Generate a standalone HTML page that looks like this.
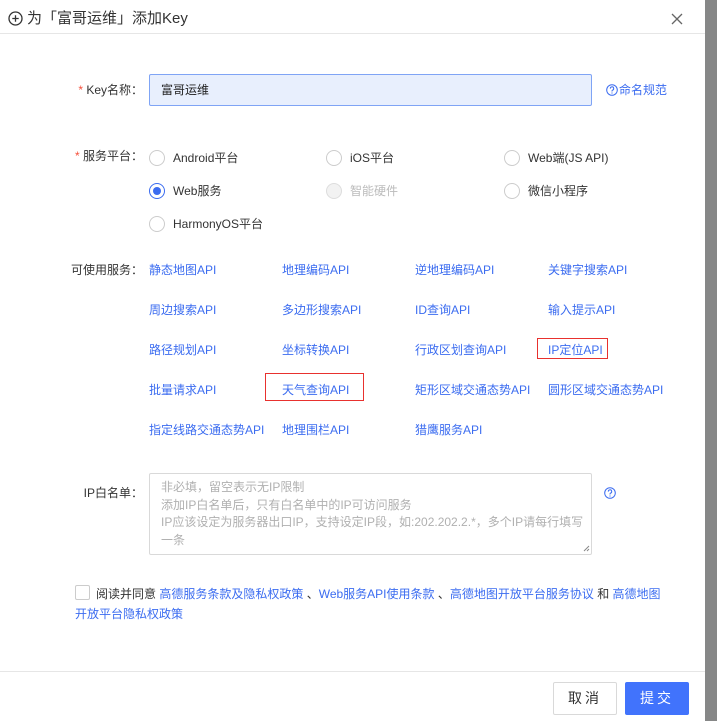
<!DOCTYPE html>
<html><head><meta charset="utf-8"><style>
*{margin:0;padding:0;box-sizing:border-box}
body{width:717px;height:721px;position:relative;background:#fff;font-family:"Liberation Sans","Noto Sans CJK SC",sans-serif;font-size:12px;color:#333;overflow:hidden}
.a{position:absolute;white-space:nowrap;line-height:16px}
.l{color:#3b6cf0}
.lab{text-align:right;width:120px}
.star{color:#f5503c}
.r{position:absolute;width:16px;height:16px;border:1px solid #ccc;border-radius:50%;background:#fff}
</style></head><body>
<div style="position:absolute;left:705px;top:0;width:12px;height:721px;background:#868787"></div>
<svg style="position:absolute;left:8px;top:11px" width="15" height="15" viewBox="0 0 15 15"><circle cx="7.5" cy="7.5" r="6.5" fill="none" stroke="#333" stroke-width="1.3"/><path d="M7.5 4.3v6.4M4.3 7.5h6.4" stroke="#333" stroke-width="1.3"/></svg>
<div class="a" style="left:27px;top:10px;font-size:15px;line-height:18px;color:#333">为「富哥运维」添加Key</div>
<svg style="position:absolute;left:671px;top:13px" width="12" height="12" viewBox="0 0 12 12"><path d="M1 1L11 11M11 1L1 11" stroke="#666" stroke-width="1.3"/></svg>
<div style="position:absolute;left:0;top:33px;width:705px;height:1px;background:#e6e6e6"></div>

<div class="a lab" style="left:23px;top:82px"><span class="star">*</span> Key名称：</div>
<div style="position:absolute;left:149px;top:74px;width:443px;height:32px;background:#e8effd;border:1px solid #7fa4f5;border-radius:2px"></div>
<div class="a" style="left:161px;top:82px;color:#222">富哥运维</div>
<svg style="position:absolute;left:606px;top:84px" width="12" height="12" viewBox="0 0 12 12"><circle cx="6" cy="6" r="5.3" fill="none" stroke="#3b6cf0"/><path d="M4.3 4.6a1.7 1.7 0 1 1 2.3 1.5c-.5.2-.6.5-.6 1v.4" fill="none" stroke="#3b6cf0"/><circle cx="6" cy="9" r=".6" fill="#3b6cf0"/></svg>
<div class="a l" style="left:619px;top:82px">命名规范</div>

<div class="a lab" style="left:23px;top:148px"><span class="star">*</span> 服务平台：</div>
<div class="r" style="left:149px;top:150px"></div><div class="a" style="left:173px;top:150px">Android平台</div>
<div class="r" style="left:326px;top:150px"></div><div class="a" style="left:350px;top:150px">iOS平台</div>
<div class="r" style="left:504px;top:150px"></div><div class="a" style="left:528px;top:150px">Web端(JS API)</div>
<div class="r" style="left:149px;top:183px;border-color:#3b6cf0"><div style="position:absolute;left:3px;top:3px;width:8px;height:8px;border-radius:50%;background:#3b6cf0"></div></div><div class="a" style="left:173px;top:183px">Web服务</div>
<div class="r" style="left:326px;top:183px;background:#f2f2f2;border-color:#ddd"></div><div class="a" style="left:350px;top:183px;color:#bbb">智能硬件</div>
<div class="r" style="left:504px;top:183px"></div><div class="a" style="left:528px;top:183px">微信小程序</div>
<div class="r" style="left:149px;top:216px"></div><div class="a" style="left:173px;top:216px">HarmonyOS平台</div>

<div class="a lab" style="left:23px;top:262px">可使用服务：</div>
<div class="a l" style="left:149px;top:262px">静态地图API</div><div class="a l" style="left:282px;top:262px">地理编码API</div><div class="a l" style="left:415px;top:262px">逆地理编码API</div><div class="a l" style="left:548px;top:262px">关键字搜索API</div>
<div class="a l" style="left:149px;top:302px">周边搜索API</div><div class="a l" style="left:282px;top:302px">多边形搜索API</div><div class="a l" style="left:415px;top:302px">ID查询API</div><div class="a l" style="left:548px;top:302px">输入提示API</div>
<div class="a l" style="left:149px;top:342px">路径规划API</div><div class="a l" style="left:282px;top:342px">坐标转换API</div><div class="a l" style="left:415px;top:342px">行政区划查询API</div><div class="a l" style="left:548px;top:342px">IP定位API</div>
<div class="a l" style="left:149px;top:382px">批量请求API</div><div class="a l" style="left:282px;top:382px">天气查询API</div><div class="a l" style="left:415px;top:382px">矩形区域交通态势API</div><div class="a l" style="left:548px;top:382px">圆形区域交通态势API</div>
<div class="a l" style="left:149px;top:422px">指定线路交通态势API</div><div class="a l" style="left:282px;top:422px">地理围栏API</div><div class="a l" style="left:415px;top:422px">猎鹰服务API</div>
<div style="position:absolute;left:537px;top:338px;width:71px;height:21px;border:1px solid #e8312e"></div>
<div style="position:absolute;left:265px;top:373px;width:99px;height:28px;border:1px solid #e8312e"></div>

<div class="a lab" style="left:23px;top:485px">IP白名单：</div>
<div style="position:absolute;left:149px;top:473px;width:443px;height:82px;border:1px solid #d9d9d9;border-radius:2px"></div>
<div class="a" style="left:161px;top:479px;color:#b0b0b0;line-height:17.5px">非必填，留空表示无IP限制<br>添加IP白名单后，只有白名单中的IP可访问服务<br>IP应该设定为服务器出口IP，支持设定IP段，如:202.202.2.*，多个IP请每行填写<br>一条</div>
<svg style="position:absolute;left:583px;top:545px" width="7" height="7" viewBox="0 0 7 7"><path d="M1 6L6 1M4 6L6 4" stroke="#888"/></svg>
<svg style="position:absolute;left:604px;top:487px" width="12" height="12" viewBox="0 0 12 12"><circle cx="6" cy="6" r="5.3" fill="none" stroke="#3b6cf0"/><path d="M4.3 4.6a1.7 1.7 0 1 1 2.3 1.5c-.5.2-.6.5-.6 1v.4" fill="none" stroke="#3b6cf0"/><circle cx="6" cy="9" r=".6" fill="#3b6cf0"/></svg>

<div style="position:absolute;left:75px;top:585px;width:15px;height:15px;border:1px solid #ccc;border-radius:2px"></div>
<div class="a" style="left:96px;top:586px">阅读并同意 <span class="l">高德服务条款及隐私权政策</span> 、<span class="l">Web服务API使用条款</span> 、<span class="l">高德地图开放平台服务协议</span> 和 <span class="l">高德地图</span></div>
<div class="a l" style="left:75px;top:606px">开放平台隐私权政策</div>

<div style="position:absolute;left:0;top:671px;width:705px;height:1px;background:#e6e6e6"></div>
<div style="position:absolute;left:553px;top:682px;width:64px;height:33px;border:1px solid #d9d9d9;border-radius:2px;text-align:center;line-height:31px;font-size:14px;color:#333;letter-spacing:3px">取消</div>
<div style="position:absolute;left:625px;top:682px;width:64px;height:33px;background:#4173fc;border-radius:2px;text-align:center;line-height:33px;font-size:14px;color:#fff;letter-spacing:3px">提交</div>
</body></html>
